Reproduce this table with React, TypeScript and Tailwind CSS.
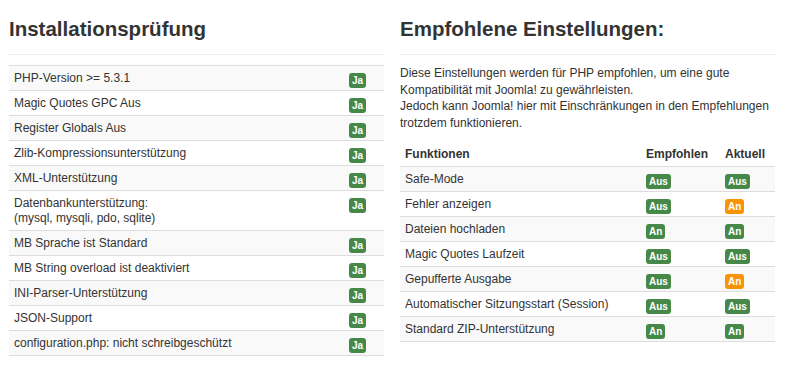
import React from "react";

const left: { label: React.ReactNode }[] = [
  { label: "PHP-Version >= 5.3.1" },
  { label: "Magic Quotes GPC Aus" },
  { label: "Register Globals Aus" },
  { label: "Zlib-Kompressionsunterstützung" },
  { label: "XML-Unterstützung" },
  {
    label: (
      <>
        Datenbankunterstützung:
        <br />
        (mysql, mysqli, pdo, sqlite)
      </>
    ),
  },
  { label: "MB Sprache ist Standard" },
  { label: "MB String overload ist deaktiviert" },
  { label: "INI-Parser-Unterstützung" },
  { label: "JSON-Support" },
  { label: "configuration.php: nicht schreibgeschützt" },
];

type V = "Aus" | "An";
const right: { label: string; rec: V; cur: V; warn?: boolean }[] = [
  { label: "Safe-Mode", rec: "Aus", cur: "Aus" },
  { label: "Fehler anzeigen", rec: "Aus", cur: "An", warn: true },
  { label: "Dateien hochladen", rec: "An", cur: "An" },
  { label: "Magic Quotes Laufzeit", rec: "Aus", cur: "Aus" },
  { label: "Gepufferte Ausgabe", rec: "Aus", cur: "An", warn: true },
  { label: "Automatischer Sitzungsstart (Session)", rec: "Aus", cur: "Aus" },
  { label: "Standard ZIP-Unterstützung", rec: "An", cur: "An" },
];

function Badge({ text, warn }: { text: string; warn?: boolean }) {
  return (
    <span
      className={
        "inline-block rounded-[3px] px-[3px] py-[2px] text-[10px] font-bold leading-[11px] text-white " +
        (warn ? "bg-[#f89406]" : "bg-[#468847]")
      }
    >
      {text}
    </span>
  );
}

export default function App() {
  return (
    <div
      className="flex h-[373px] w-[800px] gap-[16px] bg-white px-[9px] text-[12px] text-[#333]"
      style={{ fontFamily: '"Liberation Sans", Arial, sans-serif' }}
    >
      <div className="w-[375px]">
        <h1 className="pt-[17px] text-[20.5px] font-bold leading-[24px]">Installationsprüfung</h1>
        <div className="mt-[13px] h-px bg-[#eeeeee]" />
        <div className="mt-[10px] border-b border-[#dddddd]">
          {left.map((r, i) => (
            <div
              key={i}
              className={"flex border-t border-[#dddddd] " + (i % 2 === 0 ? "bg-[#f9f9f9]" : "bg-white")}
            >
              <div className="flex-1 px-[5px] py-[4.5px] leading-[15px]">{r.label}</div>
              <div className="w-[40px] px-[5px] pt-[5px]">
                <Badge text="Ja" />
              </div>
            </div>
          ))}
        </div>
      </div>
      <div className="w-[375px]">
        <h1 className="pt-[17px] text-[20.5px] font-bold leading-[24px]">Empfohlene Einstellungen:</h1>
        <div className="mt-[13px] h-px bg-[#eeeeee]" />
        <p className="mt-[10px] whitespace-nowrap leading-[16.5px]">
          Diese Einstellungen werden für PHP empfohlen, um eine gute
          <br />
          Kompatibilität mit Joomla! zu gewährleisten.
          <br />
          Jedoch kann Joomla! hier mit Einschränkungen in den Empfehlungen
          <br />
          trotzdem funktionieren.
        </p>
        <div className="mt-[11px] border-b border-[#dddddd]">
          <div className="flex font-bold">
            <div className="w-[241px] px-[5px] py-[4.5px] leading-[15px]">Funktionen</div>
            <div className="w-[79px] px-[5px] py-[4.5px] leading-[15px]">Empfohlen</div>
            <div className="w-[55px] px-[5px] py-[4.5px] leading-[15px]">Aktuell</div>
          </div>
          {right.map((r, i) => (
            <div
              key={i}
              className={"flex border-t border-[#dddddd] " + (i % 2 === 0 ? "bg-[#f9f9f9]" : "bg-white")}
            >
              <div className="w-[241px] px-[5px] py-[4.5px] leading-[15px]">{r.label}</div>
              <div className="w-[79px] px-[5px] pt-[5px]">
                <Badge text={r.rec} />
              </div>
              <div className="w-[55px] px-[5px] pt-[5px]">
                <Badge text={r.cur} warn={r.warn} />
              </div>
            </div>
          ))}
        </div>
      </div>
    </div>
  );
}
